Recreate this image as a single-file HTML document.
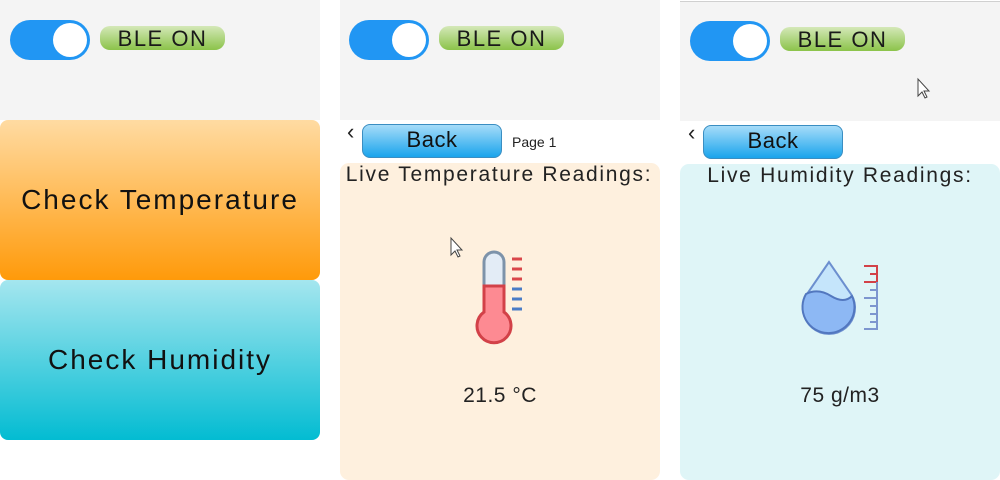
<!DOCTYPE html>
<html><head><meta charset="utf-8"><style>
*{margin:0;padding:0;box-sizing:border-box}
body{width:1000px;height:480px;background:#fff;position:relative;overflow:hidden;font-family:"Liberation Sans",sans-serif;color:#222}
.a{position:absolute}
.gray{background:#f4f4f4}
.tog{width:80px;height:40px;border-radius:20px;background:#2196f3}
.tog::after{content:"";position:absolute;right:3px;top:3px;width:34px;height:34px;border-radius:50%;background:#fff}
.ble{width:125px;height:24px;border-radius:10px;background:linear-gradient(#d4e8b8,#8bc34a);font-size:22px;text-align:center;line-height:25px;color:#1a1a1a;letter-spacing:1.5px}
.big{width:320px;height:160px;border-radius:8px;font-size:28px;text-align:center;line-height:160px;color:#111;letter-spacing:2px}
.back{width:140px;height:34px;border-radius:8px;background:linear-gradient(#a6dcf9,#1aa4ec);border:1px solid #3a8ec2;font-size:22px;text-align:center;line-height:30px;color:#111;letter-spacing:0.5px}
.lt{font-size:22px;line-height:22px;color:#222}
.card{width:320px;border-radius:9px}
.t{font-size:21px;text-align:center;width:320px;letter-spacing:1.7px}
</style></head><body>
<div class="a gray" style="left:0;top:0;width:320px;height:120px"></div>
<div class="a gray" style="left:340px;top:0;width:320px;height:120px"></div>
<div class="a gray" style="left:680px;top:1px;width:320px;height:120px;border-top:1px solid #d0d0d0"></div>

<div class="a tog" style="left:10px;top:20px"></div>
<div class="a ble" style="left:100px;top:26px">BLE ON</div>
<div class="a tog" style="left:349px;top:20px"></div>
<div class="a ble" style="left:439px;top:26px">BLE ON</div>
<div class="a tog" style="left:690px;top:21px"></div>
<div class="a ble" style="left:780px;top:27px">BLE ON</div>

<div class="a big" style="left:0;top:120px;background:linear-gradient(#ffdba2,#ff9a0a)">Check Temperature</div>
<div class="a big" style="left:0;top:280px;background:linear-gradient(#a5e6ef,#03bcd2)">Check Humidity</div>

<div class="a lt" style="left:347px;top:121px">‹</div>
<div class="a back" style="left:362px;top:124px">Back</div>
<div class="a" style="left:512px;top:134px;font-size:14px">Page 1</div>
<div class="a card" style="left:340px;top:163px;height:317px;background:#fef0de"></div>
<div class="a t" style="left:339px;top:163px">Live Temperature Readings:</div>
<div class="a t" style="left:340px;top:384px;letter-spacing:0.5px">21.5 °C</div>

<div class="a lt" style="left:688px;top:122px">‹</div>
<div class="a back" style="left:703px;top:125px">Back</div>
<div class="a card" style="left:680px;top:164px;height:316px;background:#dff5f7"></div>
<div class="a t" style="left:680px;top:164px">Live Humidity Readings:</div>
<div class="a t" style="left:680px;top:384px;letter-spacing:0.5px">75 g/m3</div>

<svg class="a" style="left:0;top:0" width="1000" height="480">
 <path d="M484,286 V262 a10,10 0 0 1 20,0 V286 Z" fill="#e3ecf6" stroke="#7d93aa" stroke-width="3"/>
 <path d="M484,286 H504 V312 a17,17 0 1 1 -20,0 Z" fill="#fd8a92" stroke="#d24148" stroke-width="3"/>
 <g stroke-width="3"><path d="M512,259h10M512,269h10M512,279h10" stroke="#d9474b"/><path d="M512,289h10M512,299h10M512,309h10" stroke="#4a7cc6"/></g>
 <path d="M829,262 L807,294 A26,26 0 1 0 851,294 Z" fill="#c5e5fb" stroke="#6c8fcf" stroke-width="2"/>
 <path d="M806,294 Q818,288 831,296 T852,296 A26,26 0 1 1 806,294 Z" fill="#8db8f4" stroke="#5277bf" stroke-width="2"/>
 <path d="M864,266h13v16h-13M877,274h-7" stroke="#d24148" stroke-width="2" fill="none"/>
 <path d="M877,282v47h-13M877,290h-7M877,298h-13M877,306h-7M877,314h-7M877,322h-7" stroke="#7d96cf" stroke-width="2" fill="none"/>
 <path d="M451,238 v17 l4,-4 3,6 2,-1 -3,-6 5,0 Z" fill="#fff" stroke="#444" stroke-width="1"/>
 <path d="M918,79 v17 l4,-4 3,6 2,-1 -3,-6 5,0 Z" fill="#fff" stroke="#444" stroke-width="1"/>
</svg>
</body></html>
